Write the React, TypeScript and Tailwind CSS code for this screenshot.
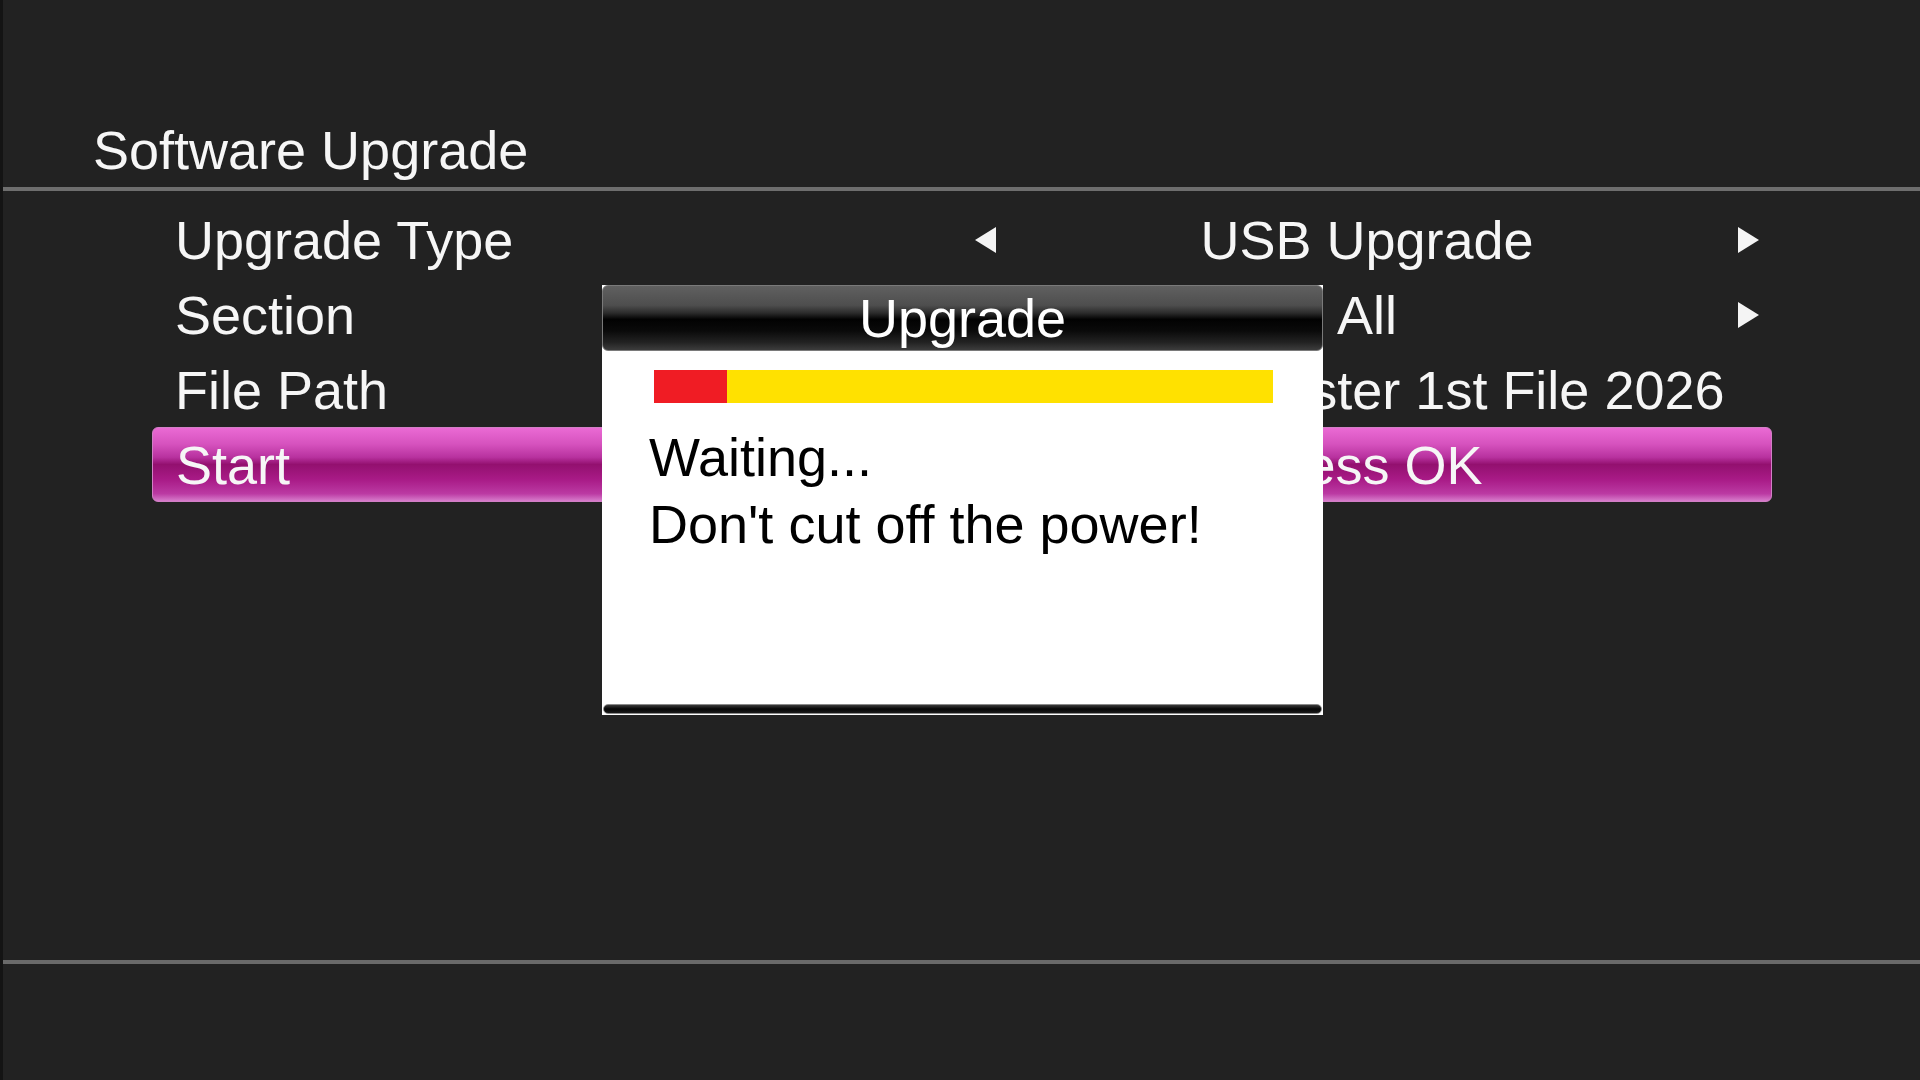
import React from "react";

interface RowProps {
    label: string;
    value: string;
    arrows?: "both" | "right" | "none";
    active?: boolean;
    valueClass?: string;
}

function LeftArrow() {
    return (
        <svg width="21" height="26" viewBox="0 0 21 26" className="block">
            <path d="M0 13 L21 0 L21 26 Z" fill="#f4f4f4" />
        </svg>
    );
}

function RightArrow() {
    return (
        <svg width="21" height="26" viewBox="0 0 21 26" className="block">
            <path d="M21 13 L0 0 L0 26 Z" fill="#f4f4f4" />
        </svg>
    );
}

function Row({ label, value, arrows = "none", active = false, valueClass = "" }: RowProps) {
    return (
        <div
            className={
                active
                    ? "flex h-[75px] items-center rounded-[6px] border border-[#d27fc6] bg-[linear-gradient(to_bottom,#ea6ad4_0%,#d652be_22%,#b8329f_40%,#93106f_50%,#a81a86_70%,#bb3aa3_90%,#d77ccb_100%)]"
                    : "flex h-[75px] items-center"
            }
        >
            <div className="w-[823px] pl-[23px] text-[54px] leading-none text-[#f6f6f6]">{label}</div>
            <div className="flex w-[21px] justify-center">{arrows === "both" && <LeftArrow />}</div>
            <div className={"flex-1 whitespace-nowrap text-center text-[54px] leading-none text-[#f6f6f6] " + valueClass}>{value}</div>
            <div className="flex w-[21px] justify-center">{arrows !== "none" && <RightArrow />}</div>
            <div className="w-[13px]" />
        </div>
    );
}

export default function App() {
    return (
        <div
            className="relative flex h-[1080px] w-[1920px] flex-col overflow-hidden border-l-[3px] border-[#141414] bg-[#222222]"
            style={{ fontFamily: '"Liberation Sans", Arial, sans-serif' }}
        >
            <div className="pl-[90px] pt-[119px] text-[54px] leading-[62px] text-[#f6f6f6]">Software Upgrade</div>
            <div className="mt-[6px] h-[4px] bg-[#6e6e6e]" />

            <div className="ml-[149px] mr-[148px] mt-[11px] flex flex-col">
                <Row label="Upgrade Type" value="USB Upgrade" arrows="both" />
                <Row label="Section" value="All" arrows="right" />
                <Row label="File Path" value="/mnt/usb0/Master 1st File 2026" valueClass="pr-[14px]" />
                <Row label="Start" value="Press OK" active />
            </div>

            <div className="flex-1" />
            <div className="h-[4px] bg-[#6a6a6a]" />
            <div className="h-[116px]" />

            {/* progress dialog */}
            <div className="absolute left-[599px] top-[285px] flex h-[430px] w-[721px] flex-col bg-white">
                <div className="flex h-[66px] items-center justify-center rounded-[6px] border border-[#7a7a7a] bg-[linear-gradient(to_bottom,#606060_0%,#4e4e4e_30%,#2c2c2c_42%,#020202_52%,#0a0a0a_70%,#222222_88%,#3c3c3c_100%)] text-[54px] leading-none text-white">
                    Upgrade
                </div>
                <div className="flex flex-1 flex-col px-[52px] pt-[19px]">
                    <div className="flex h-[33px] w-[619px]">
                        <div className="w-[73px] bg-[#f01c24]" />
                        <div className="flex-1 bg-[#ffe100]" />
                    </div>
                    <div className="mt-[21px] text-[54px] leading-[67px] text-black">
                        <div className="-ml-[5px]">Waiting...</div>
                        <div className="-ml-[5px]">Don't cut off the power!</div>
                    </div>
                </div>
                <div className="mx-[1px] mb-[1px] h-[10px] rounded-[5px] border border-[#8a8a8a] bg-[linear-gradient(to_bottom,#3a3a3a,#050505_50%,#1a1a1a)]" />
            </div>
        </div>
    );
}
